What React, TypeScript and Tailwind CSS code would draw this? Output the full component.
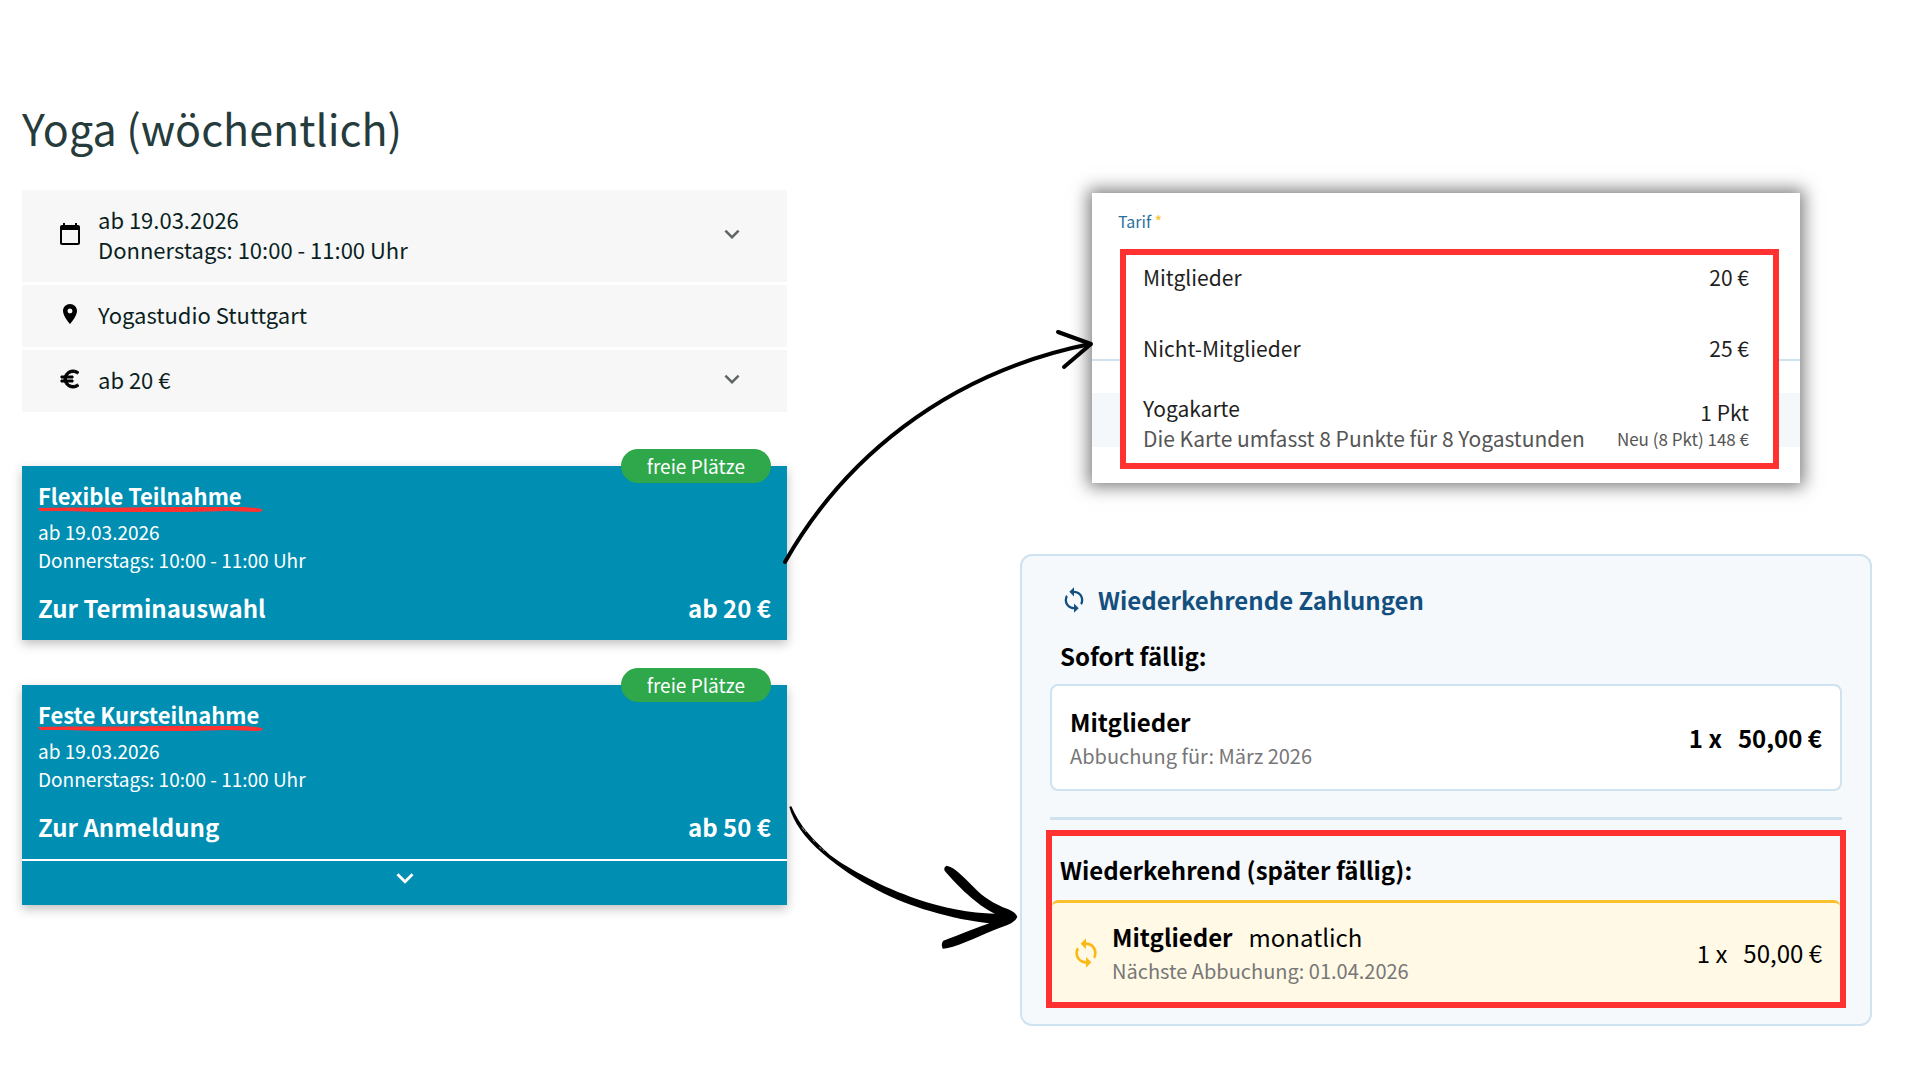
import React from 'react';
import {
  MdCalendarToday, MdExpandMore, MdLocationOn, MdSync
} from 'react-icons/md';

const Euro: React.FC = () => (
  <svg viewBox="0 0 24 24" className="h-6 w-6 fill-black stroke-black stroke-1" aria-hidden="true">
    <path d="M15 18.5c-2.51 0-4.68-1.42-5.76-3.5H15v-2H8.58c-.05-.33-.08-.66-.08-1s.03-.67.08-1H15V9H9.24C10.32 6.92 12.5 5.5 15 5.5c1.61 0 3.09.59 4.23 1.57L21 5.3C19.41 3.87 17.3 3 15 3c-3.92 0-7.24 2.51-8.48 6H3v2h3.06c-.04.33-.06.66-.06 1s.02.67.06 1H3v2h3.52c1.24 3.49 4.56 6 8.48 6 2.31 0 4.41-.87 6-2.3l-1.78-1.77c-1.12.98-2.6 1.57-4.22 1.57z" />
  </svg>
);

const details = [
  {
    icon: <MdCalendarToday />,
    lines: ['ab 19.03.2026', 'Donnerstags: 10:00 - 11:00 Uhr'],
    expandable: true
  },
  {
    icon: <MdLocationOn />,
    lines: ['Yogastudio Stuttgart'],
    expandable: false
  },
  {
    icon: <Euro />,
    lines: ['ab 20 €'],
    expandable: true
  }
];

const offers = [
  {
    title: 'Flexible Teilnahme',
    action: 'Zur Terminauswahl',
    price: 'ab 20 €',
    expandable: false
  },
  {
    title: 'Feste Kursteilnahme',
    action: 'Zur Anmeldung',
    price: 'ab 50 €',
    expandable: true
  }
];

const Underline: React.FC = () => (
  <svg
    viewBox="0 0 226 7"
    preserveAspectRatio="none"
    className="absolute left-0 top-full -mt-1 h-[7px] w-[226px]"
    aria-hidden="true"
  >
    <path
      d="M0 2 C40 1 80 2 120 1 L205 1 Q224 2 225 4 L222 6 L190 5 L150 6 L60 6 L30 5 L2 5 Z"
      fill="#ff3131"
    />
  </svg>
);

const Details: React.FC = () => (
  <ul className="mt-[33px] flex flex-col gap-[3px]">
    {details.map((item) => (
      <li
        key={item.lines[0]}
        className="flex items-center bg-[#f7f7f7] pb-[18px] pl-9 pr-10 pt-3.5 text-[22px] leading-[30px] text-[#0b1f1f]"
      >
        <span className="mr-4 text-2xl text-black">{item.icon}</span>
        <div className="flex-1">
          {item.lines.map((line) => (
            <p key={line}>{line}</p>
          ))}
        </div>
        {item.expandable && (
          <button type="button" aria-label="Details anzeigen" className="text-3xl text-[#5f6666]">
            <MdExpandMore />
          </button>
        )}
      </li>
    ))}
  </ul>
);

const Offer: React.FC<{ offer: (typeof offers)[number] }> = ({ offer }) => (
  <article className="relative bg-[#008fb3] text-white shadow-[0_4px_10px_rgba(0,0,0,0.25)]">
    <span className="absolute -top-[17px] right-4 rounded-full bg-[#2ea84a] px-[26px] text-[19px] leading-[34px]">
      freie Plätze
    </span>
    <div className="px-4 py-3.5">
      <h2 className="text-[22px] font-bold leading-[30px]">
        <span className="relative inline-block">
          {offer.title}
          <Underline />
        </span>
      </h2>
      <p className="mt-2 text-[19px] leading-7">
        ab 19.03.2026
        <br />
        Donnerstags: 10:00 - 11:00 Uhr
      </p>
      <div className="mt-4 flex justify-between text-2xl font-bold leading-9">
        <a href="#">{offer.action}</a>
        <span>{offer.price}</span>
      </div>
    </div>
    {offer.expandable && (
      <button
        type="button"
        aria-label="Mehr anzeigen"
        className="flex h-[46px] w-full items-center justify-center border-t-2 border-white pb-2.5 text-[34px]"
      >
        <MdExpandMore />
      </button>
    )}
  </article>
);

const Tariffs: React.FC = () => (
  <section className="mx-[72px] h-[290px] bg-white pt-4 shadow-[0_0_16px_4px_rgba(0,0,0,0.5)]">
    <h2 className="px-[26px] text-base leading-6 text-[#2a6f9f]">
      Tarif <span className="text-[#fbbf24]">*</span>
    </h2>
    <div className="mt-4 bg-[linear-gradient(#cfe2ef,#cfe2ef),linear-gradient(#f4f8fb,#f4f8fb)] bg-[length:100%_2px,100%_54px] bg-[position:0_110px,0_144px] bg-no-repeat px-7">
      <div className="-mr-[7px] h-[220px] border-[6px] border-[#ff3131] bg-white pl-[17px] pr-6 text-[21px] leading-[30px] text-[#1f1f1f]">
        <div className="flex justify-between pt-[7px]">
          <span>Mitglieder</span>
          <span>20 €</span>
        </div>
        <div className="mt-[41px] flex justify-between">
          <span>Nicht-Mitglieder</span>
          <span>25 €</span>
        </div>
        <div className="mt-[30px] flex items-end justify-between">
          <div>
            <p>Yogakarte</p>
            <p className="text-[#555]">Die Karte umfasst 8 Punkte für 8 Yogastunden</p>
          </div>
          <div className="text-right">
            <p>1 Pkt</p>
            <p className="pb-0.5 text-[17px] leading-6 text-[#555]">Neu (8 Pkt) 148 €</p>
          </div>
        </div>
      </div>
    </div>
  </section>
);

const Payments: React.FC = () => (
  <section className="mt-[71px] rounded-xl border-2 border-[#cfe2ef] bg-[#f5f9fc] px-7 pb-4 pt-[26px]">
    <h2 className="flex items-center gap-2.5 px-2.5 text-2xl font-bold leading-9 text-[#14507f]">
      <MdSync className="text-[28px]" />
      Wiederkehrende Zahlungen
    </h2>
    <h3 className="mt-5 px-2.5 text-2xl font-bold leading-9">Sofort fällig:</h3>
    <div className="mt-2.5 flex h-[107px] items-center justify-between rounded-lg border-2 border-[#cfe2ef] bg-white px-[18px]">
      <div>
        <p className="text-2xl font-bold leading-9">Mitglieder</p>
        <p className="text-xl leading-8 text-[#777]">Abbuchung für: März 2026</p>
      </div>
      <p className="flex gap-4 text-2xl font-bold">
        <span>1 x</span>
        <span>50,00 €</span>
      </p>
    </div>
    <hr className="mt-[26px] border-t-[3px] border-[#cfe2ef]" />
    <div className="-mx-1 mt-[10px] border-[6px] border-[#ff3131] pt-4">
      <h3 className="px-2 text-2xl font-bold leading-9">Wiederkehrend (später fällig):</h3>
      <div className="mt-3 flex h-[102px] items-center rounded-t-md border-t-[3px] border-[#fbc02d] bg-[#fff9e6] px-[18px]">
        <MdSync className="mr-2.5 text-[32px] text-[#fdb913]" />
        <div className="flex-1">
          <p className="flex gap-4 text-2xl leading-9">
            <span className="font-bold">Mitglieder</span>
            <span>monatlich</span>
          </p>
          <p className="text-xl leading-8 text-[#777]">Nächste Abbuchung: 01.04.2026</p>
        </div>
        <p className="flex gap-4 text-2xl">
          <span>1 x</span>
          <span>50,00 €</span>
        </p>
      </div>
    </div>
  </section>
);

const Arrows: React.FC = () => (
  <svg viewBox="787 0 233 1080" className="relative z-10 w-full overflow-visible" aria-hidden="true">
    {/* Flexible Teilnahme -> Tarif */}
    <g fill="none" stroke="#000" strokeWidth="4" strokeLinecap="round" strokeLinejoin="round">
      <path d="M785 562 C841 463 942 374 1090 344" />
      <path d="M1058 332 L1091 344 L1064 367" />
    </g>
    {/* Feste Kursteilnahme -> Wiederkehrende Zahlungen */}
    <g transform="translate(770 780) scale(0.3333)">
      <path d="M58 80 C70 125 100 170 160 222 C260 308 380 365 480 393 C540 412 610 425 658 430 C620 443 580 460 520 482 Q512 492 518 506 L530 505 C580 493 640 462 690 443 Q735 430 742 411 Q738 398 715 388 C670 370 640 352 610 320 C580 290 555 262 530 257 Q520 262 524 272 C560 315 620 375 675 401 C600 400 520 384 440 357 C340 322 240 270 180 225 C130 180 90 140 64 79 Z" />
      <path d="M96 142 l6 8 M104 150 l4 6 M128 180 l6 5 M148 202 l6 4 M158 208 l5 5" stroke="#fff" strokeWidth="2" />
    </g>
  </svg>
);

const App: React.FC = () => (
  <main className="grid grid-cols-[765fr_233fr_852fr] items-start bg-white pl-[22px] pr-12 font-['Noto_Sans_CJK_SC',sans-serif] text-black">
    <div className="pt-[97px]">
      <h1 className="text-[43px] leading-[60px] text-[#263c3c]">Yoga (wöchentlich)</h1>
      <Details />
      <div className="mt-[54px] flex flex-col gap-[45px]">
        {offers.map((offer) => (
          <Offer key={offer.title} offer={offer} />
        ))}
      </div>
    </div>
    <Arrows />
    <div className="pt-[193px]">
      <Tariffs />
      <Payments />
    </div>
  </main>
);

export default App;
